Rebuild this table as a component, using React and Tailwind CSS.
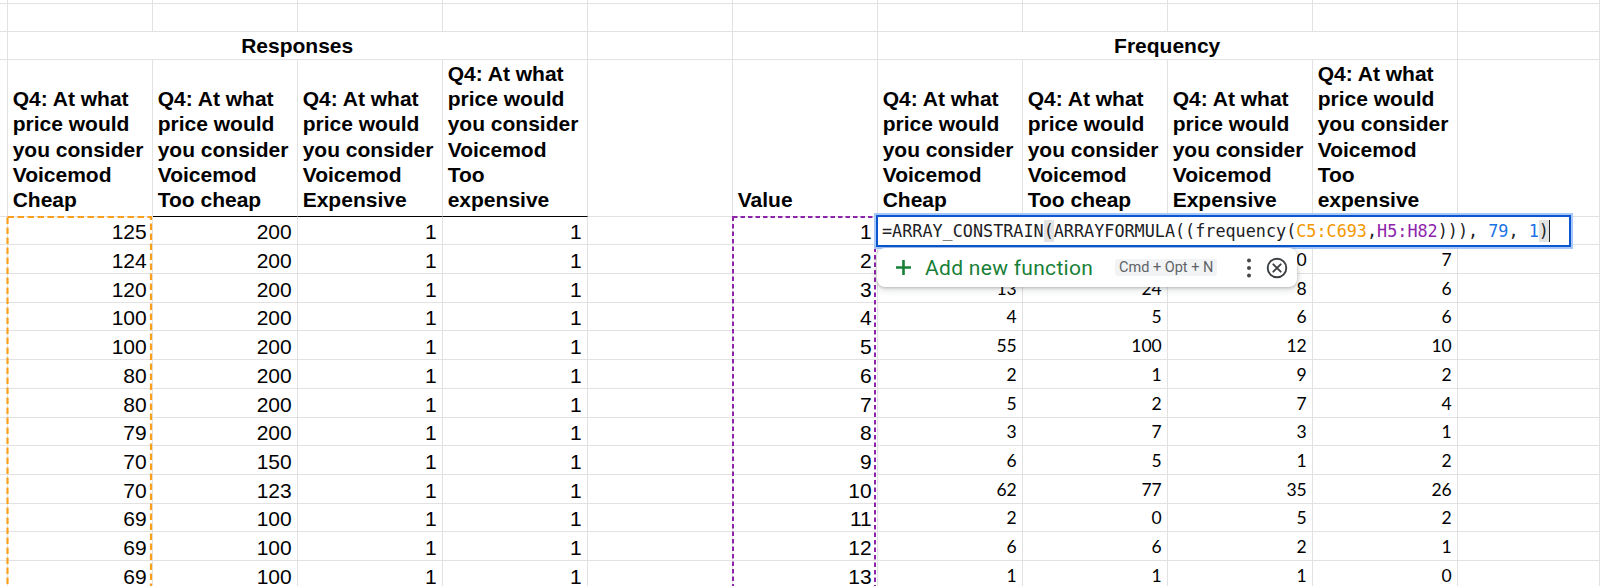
import React from "react";

const LINE = "border-r border-b border-[#e2e2e2]";
const ARIAL = "font-['Liberation_Sans',Arial,sans-serif]";
const LATO = "font-['Lato','Open_Sans',sans-serif]";

const left = [
  [125, 200, 1, 1],
  [124, 200, 1, 1],
  [120, 200, 1, 1],
  [100, 200, 1, 1],
  [100, 200, 1, 1],
  [80, 200, 1, 1],
  [80, 200, 1, 1],
  [79, 200, 1, 1],
  [70, 150, 1, 1],
  [70, 123, 1, 1],
  [69, 100, 1, 1],
  [69, 100, 1, 1],
  [69, 100, 1, 1],
];

const right = [
  ["", "", "", ""],
  ["", "", "0", "7"],
  ["13", "24", "8", "6"],
  ["4", "5", "6", "6"],
  ["55", "100", "12", "10"],
  ["2", "1", "9", "2"],
  ["5", "2", "7", "4"],
  ["3", "7", "3", "1"],
  ["6", "5", "1", "2"],
  ["62", "77", "35", "26"],
  ["2", "0", "5", "2"],
  ["6", "6", "2", "1"],
  ["1", "1", "1", "0"],
];

const headers = [
  ["Q4: At what", "price would", "you consider", "Voicemod", "Cheap"],
  ["Q4: At what", "price would", "you consider", "Voicemod", "Too cheap"],
  ["Q4: At what", "price would", "you consider", "Voicemod", "Expensive"],
  ["Q4: At what", "price would", "you consider", "Voicemod", "Too", "expensive"],
];

function Empty() {
  return <div className={LINE} />;
}

function Header({ lines, dark }) {
  return (
    <div
      className={`${LINE} ${dark ? "border-b-black" : ""} flex flex-col justify-end pl-[5px] pb-[3px] font-bold text-[21px] leading-[25.3px] text-black ${ARIAL}`}
    >
      {lines.map((l, i) => (
        <div key={i} className="whitespace-nowrap">
          {l}
        </div>
      ))}
    </div>
  );
}

function Num({ v, lato }) {
  return (
    <div
      className={`${LINE} flex items-end justify-end pr-[5px] text-black whitespace-nowrap ${
        lato ? `${LATO} text-[17.5px] leading-[24px] pb-[1px]` : `${ARIAL} text-[21px] leading-[24px]`
      }`}
    >
      {v}
    </div>
  );
}

export default function App() {
  const topRow = Array.from({ length: 12 }, (_, i) => <Empty key={"a" + i} />);
  const row1 = Array.from({ length: 12 }, (_, i) => <Empty key={"b" + i} />);

  return (
    <div className="relative w-[1600px] h-[586px] overflow-hidden bg-white">
      <div className="grid grid-cols-[7.7px_repeat(10,145px)_1fr] grid-rows-[3.5px_28px_28.5px_156.5px_repeat(13,28.73px)]">
        {topRow}
        {row1}
        {/* row 2 */}
        <Empty />
        <div
          className={`col-span-4 ${LINE} flex items-end justify-center pb-[1px] font-bold text-[21px] leading-[24px] text-black ${ARIAL}`}
        >
          Responses
        </div>
        <Empty />
        <Empty />
        <div
          className={`col-span-4 ${LINE} flex items-end justify-center pb-[1px] font-bold text-[21px] leading-[24px] text-black ${ARIAL}`}
        >
          Frequency
        </div>
        <Empty />
        {/* row 3 headers */}
        <Empty />
        {headers.map((h, i) => (
          <Header key={"hl" + i} lines={h} dark={i > 0} />
        ))}
        <Empty />
        <Header lines={["Value"]} />
        {headers.map((h, i) => (
          <Header key={"hr" + i} lines={h} />
        ))}
        <Empty />
        {/* data rows */}
        {left.map((r, ri) => (
          <React.Fragment key={"r" + ri}>
            <Empty />
            {r.map((v, ci) => (
              <Num key={ci} v={v} />
            ))}
            <Empty />
            <Num v={ri + 1} />
            {right[ri].map((v, ci) => (
              <Num key={"x" + ci} v={v} lato />
            ))}
            <Empty />
          </React.Fragment>
        ))}
      </div>

      {/* dashed range highlights */}
      <svg className="absolute left-0 top-0 pointer-events-none" width="1600" height="586">
        <rect x="7.5" y="217" width="143.5" height="400" fill="none" stroke="#fa9f1e" strokeWidth="2.2" strokeDasharray="6.5 3.5" />
        <rect x="733" y="217" width="142" height="400" fill="none" stroke="#8e24aa" strokeWidth="2" strokeDasharray="4.5 3" />
      </svg>

      {/* formula editor box */}
      <div className="absolute left-[874px] top-[213px] w-[699px] h-[36px] border-2 border-[#a8c7fa]">
        <div className="h-full border-2 border-[#0b57d0] bg-white flex items-center pl-[4px] whitespace-pre font-['DejaVu_Sans_Mono',monospace] text-[16.8px] leading-[22px] text-[#202124]">
          <span>=ARRAY_CONSTRAIN</span>
          <span className="bg-[#e3e3e3]">(</span>
          <span>ARRAYFORMULA((frequency(</span>
          <span className="text-[#f29900]">C5:C693</span>
          <span>,</span>
          <span className="text-[#8e24aa]">H5:H82</span>
          <span>))), </span>
          <span className="text-[#1a73e8]">79</span>
          <span>, </span>
          <span className="text-[#1a73e8]">1</span>
          <span className="bg-[#e3e3e3]">)</span>
          <span className="inline-block w-[1.5px] h-[22px] bg-[#202124]" />
        </div>
      </div>

      {/* autocomplete popup */}
      <div className="absolute left-[877px] top-[248px] w-[420px] h-[39px] bg-white rounded-[8px] shadow-[0_1px_3px_rgba(60,64,67,0.3),0_2px_6px_2px_rgba(60,64,67,0.12)] flex items-center pl-[18px]">
        <svg width="17" height="17" viewBox="0 0 17 17" className="shrink-0">
          <path d="M8.5 1v15M1 8.5h15" stroke="#188038" strokeWidth="2.6" strokeLinecap="butt" />
        </svg>
        <span className="ml-[13px] w-[172px] whitespace-nowrap font-['Roboto',sans-serif] text-[21px] leading-[24px] tracking-[0.3px] text-[#188038]">
          Add new function
        </span>
        <span className="ml-[18px] h-[17px] px-[4px] flex items-center rounded-[3px] bg-[#f1f3f4] whitespace-nowrap font-['Roboto',sans-serif] text-[14.5px] text-[#5f6368]">
          Cmd + Opt + N
        </span>
        <svg width="6" height="22" viewBox="0 0 6 22" className="ml-[29px] shrink-0">
          <circle cx="3" cy="3.5" r="2" fill="#444746" />
          <circle cx="3" cy="11" r="2" fill="#444746" />
          <circle cx="3" cy="18.5" r="2" fill="#444746" />
        </svg>
        <svg width="22" height="22" viewBox="0 0 22 22" className="ml-[14px] shrink-0">
          <circle cx="11" cy="11" r="9.3" fill="none" stroke="#3c4043" strokeWidth="1.9" />
          <path d="M7.3 7.3l7.4 7.4M14.7 7.3l-7.4 7.4" stroke="#3c4043" strokeWidth="1.9" strokeLinecap="round" />
        </svg>
      </div>
    </div>
  );
}
